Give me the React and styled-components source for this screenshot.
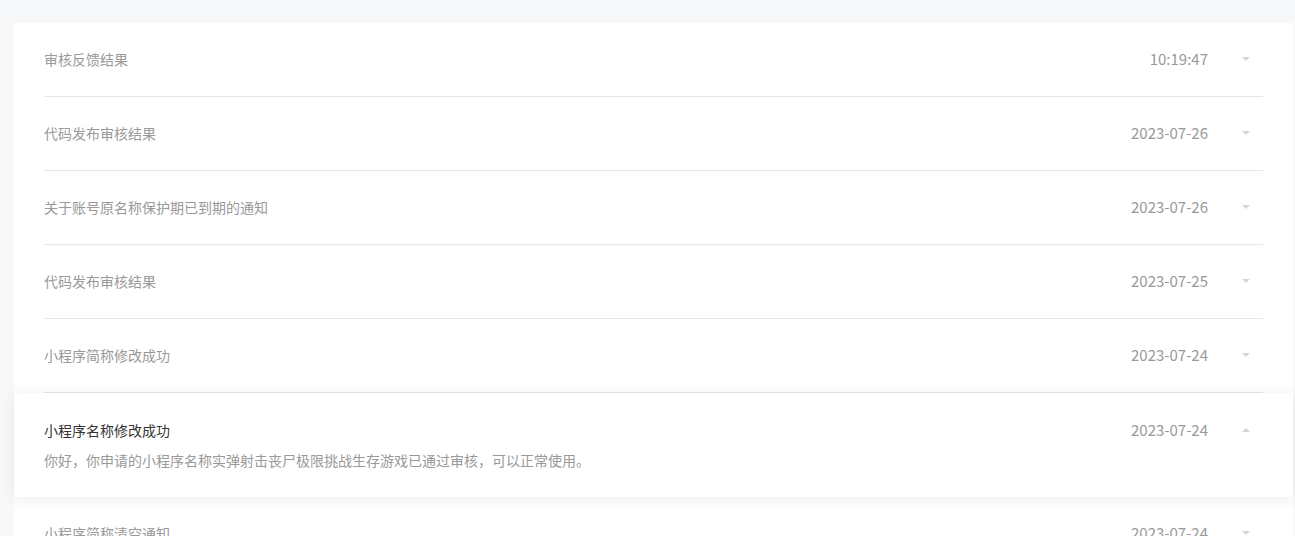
import React from 'react'
import styled, { createGlobalStyle } from 'styled-components'

const GlobalStyle = createGlobalStyle`
  html, body {
    margin: 0;
    padding: 0;
    background: #f7f8fa;
    font-family: "Noto Sans CJK SC", "Noto Sans", sans-serif;
  }
`

const Page = styled.div`
  padding: 23px 2px 0 14px;
  height: 536px;
  box-sizing: border-box;
  overflow: hidden;
`

const Card = styled.div`
  background: #fff;
  border-radius: 4px;
`

const Item = styled.div`
  position: relative;
  padding: 0 30px;
  background: #fff;
  ${p => p.open && `
    box-shadow: 0 2px 14px rgba(0, 0, 0, 0.08);
    z-index: 1;
  `}
`

const Row = styled.div`
  display: flex;
  flex-direction: column;
  justify-content: center;
  box-sizing: border-box;
  padding-bottom: ${p => (p.open ? '0' : '2px')};
  height: ${p => (p.open ? '104px' : '74px')};
  border-bottom: 1px solid ${p => (p.open ? 'transparent' : '#e5e6eb')};
`

const Head = styled.div`
  display: flex;
  align-items: center;
  height: 20px;
`

const Title = styled.div`
  flex: 1;
  font-size: 14px;
  color: ${p => (p.open ? '#333' : '#999')};
`

const Date = styled.div`
  font-size: 15px;
  color: #999;
  margin-right: 34px;
`

const Caret = styled.span`
  width: 0;
  height: 0;
  margin-right: 13px;
  border-left: 4px solid transparent;
  border-right: 4px solid transparent;
  ${p => (p.open ? 'border-bottom: 4px solid #d6d6d6;' : 'border-top: 4px solid #d6d6d6;')}
`

const Body = styled.div`
  margin-top: 10px;
  font-size: 14px;
  color: #999;
  line-height: 20px;
`

const items = [
  { title: '审核反馈结果', date: '10:19:47' },
  { title: '代码发布审核结果', date: '2023-07-26' },
  { title: '关于账号原名称保护期已到期的通知', date: '2023-07-26' },
  { title: '代码发布审核结果', date: '2023-07-25' },
  { title: '小程序简称修改成功', date: '2023-07-24' },
  {
    title: '小程序名称修改成功',
    date: '2023-07-24',
    open: true,
    body: '你好，你申请的小程序名称实弹射击丧尸极限挑战生存游戏已通过审核，可以正常使用。',
  },
  { title: '小程序简称清空通知', date: '2023-07-24' },
]

export default function App() {
  return (
    <>
      <GlobalStyle />
      <Page>
        <Card>
          {items.map((it, i) => (
            <Item key={i} open={it.open}>
              <Row open={it.open}>
                <Head>
                  <Title open={it.open}>{it.title}</Title>
                  <Date>{it.date}</Date>
                  <Caret open={it.open} />
                </Head>
                {it.body && <Body>{it.body}</Body>}
              </Row>
            </Item>
          ))}
        </Card>
      </Page>
    </>
  )
}
